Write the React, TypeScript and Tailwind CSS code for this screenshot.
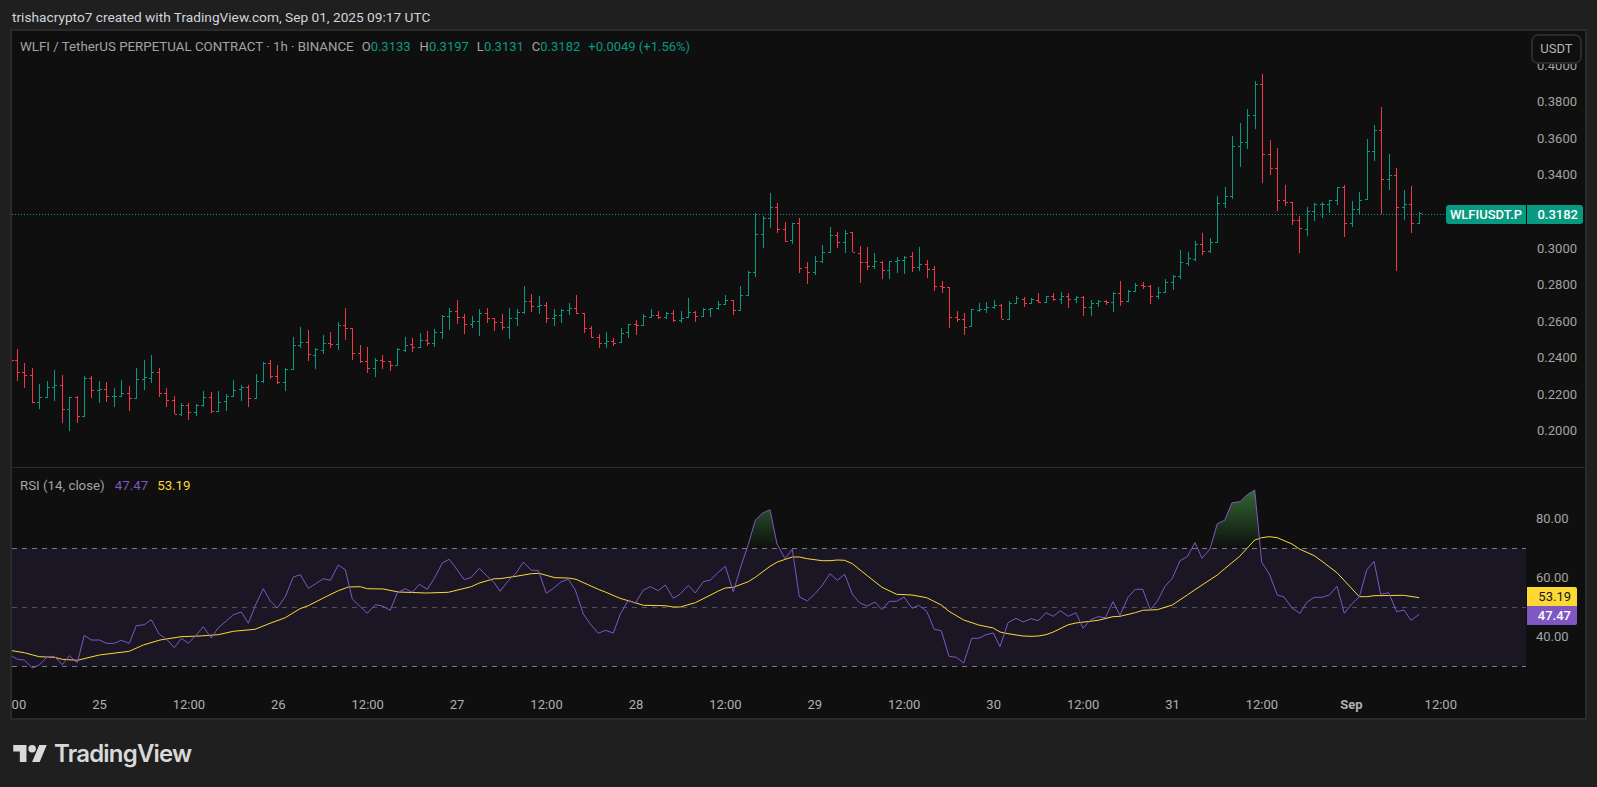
import React from "react";

type Bar = [number, number, number, number, number];

const s5: Bar[] = [
[52,237,332,271,307],[73,279,353,307,316],[97,294,398,316,398],[118,342,416,398,382],[142,333,382,382,352],[163,300,392,352,346],[187,316,458,346,418],[208,382,482,418,382],[232,378,458,382,439],[253,319,439,439,325],
[274,319,383,325,361],[298,334,398,361,358],[319,337,395,358,379],[343,355,410,379,379],[364,331,379,379,370],[388,349,422,370,385],[409,295,388,385,328],[433,271,359,328,323],[454,256,338,325,307],[478,295,382,307,370],
[499,355,410,370,391],[523,379,433,391,433],[544,400,437,433,406],[565,400,449,406,427],[589,403,437,427,406],[610,364,412,406,382],[634,367,430,382,424],[655,364,424,424,397],[679,373,422,394,379],[700,331,382,379,361],
[724,346,394,358,352],[745,345,412,352,385],[769,313,385,385,334],[790,277,338,334,280],[811,270,328,280,319],[832,286,343,319,337],[856,295,362,337,298],[880,202,298,298,226],[901,172,233,226,217],[925,181,272,217,253],
[946,235,296,256,238],[970,196,253,241,220],[991,187,233,220,223],[1015,157,239,223,166],[1036,115,211,166,175],[1057,175,269,175,250],[1081,226,280,250,274],[1102,232,310,274,295],[1126,265,320,295,271],[1147,256,296,271,274],
[1171,274,302,274,286],[1192,235,289,286,238],
];
const s6: Bar[] = [
[16,471,515,510,495],[37,474,515,493,502],[61,460,505,502,481],[82,454,497,481,490],[103,448,500,490,457],[127,406,476,457,409],[148,385,449,409,394],[172,361,431,394,412],[193,403,461,412,433],[217,408,443,433,424],
[238,388,467,424,400],[262,385,428,400,415],[283,415,452,415,427],[307,403,449,427,442],[328,385,476,442,415],[352,388,437,415,397],[373,319,401,397,364],[394,343,395,364,379],[418,349,401,379,376],[439,367,428,376,415],
[463,388,437,415,406],[484,388,428,406,391],[508,370,404,391,385],[529,346,403,385,401],[553,400,458,401,445],[574,439,473,445,472],[598,463,503,472,490],[619,457,503,490,484],[640,475,497,484,490],[664,445,487,487,460],
[685,433,473,457,433],[709,421,464,433,436],[730,403,436,436,409],[754,388,415,412,406],[775,394,418,406,412],[799,397,418,412,400],[820,391,427,400,421],[844,394,428,421,415],[865,355,412,412,397],[886,394,425,397,409],
[910,385,412,409,388],[931,385,410,388,385],[955,364,391,385,373],[976,346,373,373,361],[1000,361,404,361,391],[1021,319,391,391,346],[1045,274,346,346,277],[1066,100,290,277,163],[1090,109,203,163,115],[1111,40,145,115,82],
[1132,70,160,82,148],[1156,127,187,148,184],[1177,130,193,181,130],[1198,114,278,130,265],
];
const s7: Bar[] = [
[22,247,311,262,277],[46,229,284,277,244],[67,196,248,244,217],[91,142,217,217,166],[112,157,204,166,187],[136,151,218,187,160],[157,157,217,157,217],[181,199,308,220,247],[202,202,269,247,259],[223,220,266,259,244],
[247,244,296,247,271],[268,244,296,271,244],[292,232,278,244,241],[313,229,281,241,232],[337,217,275,229,262],[358,202,272,262,253],[382,241,293,253,268],[403,259,332,268,319],[427,304,338,319,322],[448,322,443,322,412],
[472,394,425,412,418],[493,400,464,418,442],[514,388,439,439,388],[538,370,395,391,388],[559,367,398,388,382],[583,361,388,382,376],[604,373,418,376,418],[628,364,418,418,370],[649,349,371,370,355],[673,352,380,358,370],
[694,355,373,370,358],[715,340,370,361,367],[739,349,370,367,349],[760,340,364,349,358],[784,337,371,358,349],[805,340,383,349,358],[829,349,370,358,352],[850,349,407,352,382],[874,361,407,382,370],[895,361,380,370,364],
[919,361,376,364,367],[940,337,395,367,340],[961,304,377,340,364],[985,331,367,364,334],[1006,310,337,334,316],[1030,307,326,316,319],[1051,316,371,319,349],[1075,322,356,349,337],[1096,298,337,337,307],[1120,286,331,307,289],
[1141,211,296,289,247],[1165,217,257,250,235],[1186,184,244,238,193],
];
const s8: Bar[] = [
[157,520,584,553,574],[181,535,578,575,547],[202,408,547,547,430],[226,382,443,430,409],[247,229,416,409,259],[271,190,320,259,247],[292,148,266,247,166],[316,64,206,166,73],[337,43,368,73,283],[361,241,344,283,325],
[382,265,452,325,421],[406,376,437,421,427],[427,427,494,427,481],[448,469,578,481,505],[472,442,527,508,454],[493,430,482,454,433],[517,427,473,433,433],[538,421,458,433,421],[562,382,434,421,382],[583,376,532,382,490],
[607,424,500,490,448],[628,397,463,448,421],[652,238,418,418,274],[673,196,302,274,211],[694,142,463,211,358],[718,283,389,358,346],[739,325,632,346,442],[763,391,479,442,433],[784,379,518,433,490],[808,457,490,490,460],
];

const toReal = (rows: Bar[], ox: number, oy: number) =>
  rows.map(([z, h, l, o, c]) => ({
    x: Math.floor(ox + z / 3) + 0.5,
    h: oy + h / 3,
    l: oy + l / 3,
    o: Math.floor(oy + o / 3) + 0.5,
    c: Math.floor(oy + c / 3) + 0.5,
    up: c <= o,
  }));
const bars = [
  ...toReal(s5, 0, 270),
  ...toReal(s6, 400, 180),
  ...toReal(s7, 800, 180),
  ...toReal(s8, 1150, 60),
];
const GREEN = "#089981";
const RED = "#f23645";

const pts = (arr: number[][], ox: number) =>
  arr.map(([z, v]) => [ox + z / 3, 460 + v / 3] as [number, number]);

const rsi = [
  ...pts([[36,588],[52,598],[73,600],[97,624],[118,615],[142,590],[163,589],[187,614],[208,587],[232,608],[253,526],[274,540],[298,540],[319,550],[343,550],[364,541],[388,550],[409,497],[433,494],[454,479],[478,523],[499,537],[523,563],[544,535],[565,550],[589,525],[610,500],[634,534],[655,503],[679,483],[700,464],[724,456],[745,490],[769,430],[790,386],[811,423],[832,444],[856,410],[880,351],[901,344],[925,385],[946,372],[970,356],[991,361],[1015,315],[1036,329],[1057,417],[1081,440],[1102,460],[1126,434],[1147,438],[1171,451],[1192,398],[1216,386],[1237,397],[1258,373],[1282,388],[1303,355],[1327,309],[1348,298],[1372,330],[1393,359],[1414,352],[1438,325],[1462,349],[1483,368]], 0),
  ...pts([[0,394],[25,362],[48,340],[70,306],[94,331],[115,331],[139,400],[160,385],[184,365],[205,358],[226,390],[250,462],[271,492],[295,520],[316,511],[340,519],[361,462],[385,421],[406,430],[430,390],[451,380],[475,392],[496,375],[520,415],[541,402],[565,376],[586,399],[610,365],[631,360],[655,337],[676,319],[700,395],[721,325],[745,253],[766,181],[787,160],[810,149],[831,252],[855,296],[877,268],[898,410],[922,423],[946,400],[967,376],[990,341],[1012,361],[1034,343],[1057,402],[1078,428],[1102,438],[1125,426],[1146,449],[1168,424],[1190,424],[1212,411],[1236,445],[1256,436],[1280,454],[1303,508],[1324,512],[1347,589],[1369,592],[1391,609],[1415,535],[1436,535],[1458,524],[1480,519]], 500),
  ...pts([[0,560],[24,488],[48,475],[69,486],[93,476],[115,482],[138,458],[160,469],[181,452],[205,469],[228,458],[249,505],[272,479],[294,470],[316,473],[339,425],[360,466],[384,412],[406,388],[428,388],[451,449],[472,424],[495,379],[517,355],[540,302],[562,290],[585,248],[606,295],[630,267],[652,191],[674,181],[696,128],[720,125],[742,104],[764,90],[785,307],[808,342],[832,405],[852,411],[876,444],[900,460],[920,427],[943,412],[966,412],[988,405],[1011,379],[1033,460],[1055,432],[1078,411],[1100,330],[1122,304],[1142,403],[1166,398],[1190,455],[1212,450],[1233,481],[1258,463]], 1000),
];
const ma = [
  ...pts([[36,572],[73,578],[118,590],[163,592],[187,598],[232,601],[298,585],[388,574],[430,555],[480,540],[543,530],[600,528],[655,524],[700,514],[765,508],[810,490],[856,473],[900,446],[925,437],[970,414],[1015,392],[1045,381],[1081,380],[1102,386],[1150,387],[1195,396],[1280,399],[1345,397],[1414,380],[1438,369],[1483,356]], 0),
  ...pts([[0,356],[48,349],[94,341],[117,340],[165,353],[205,354],[228,358],[295,388],[316,396],[360,415],[405,428],[430,436],[495,437],[520,441],[541,441],[586,428],[630,406],[655,393],[676,384],[700,382],[745,365],[766,352],[810,319],[832,306],[877,291],[898,291],[922,296],[967,302],[990,302],[1012,300],[1034,301],[1057,311],[1102,347],[1146,382],[1190,403],[1236,405],[1280,413],[1324,435],[1347,454],[1391,480],[1436,495],[1480,504]], 500),
  ...pts([[0,516],[24,521],[69,528],[93,529],[115,528],[138,524],[160,516],[205,494],[228,489],[294,481],[339,470],[360,469],[406,458],[428,451],[472,449],[517,435],[562,405],[585,389],[652,345],[674,326],[718,290],[742,264],[764,240],[785,233],[808,230],[832,233],[876,252],[900,268],[943,287],[966,304],[1011,338],[1078,410],[1100,410],[1122,407],[1210,406],[1258,413]], 1000),
];
const line = (p: [number, number][]) => p.map(([x, y]) => `${x.toFixed(1)},${y.toFixed(1)}`).join(" ");

const prices = ["0.4000", "0.3800", "0.3600", "0.3400", "0.3200", "0.3000", "0.2800", "0.2600", "0.2400", "0.2200", "0.2000"];
const times = ["12:00", "25", "12:00", "26", "12:00", "27", "12:00", "28", "12:00", "29", "12:00", "30", "12:00", "31", "12:00", "Sep", "12:00"];

const Ohlc = ({ k, v, gap }: { k: string; v: string; gap: string }) => (
  <span className={gap}>
    {k}
    <span className="text-[#089981]">{v}</span>
  </span>
);

export default function App() {
  return (
    <div className="w-[1597px] h-[787px] overflow-hidden bg-[#1f1f1f] flex flex-col font-['Roboto',sans-serif]">
      <div className="h-[29px] flex-none pl-[12px] flex items-center text-[13.7px] text-[#d1d4dc] pt-[5px] whitespace-nowrap">
        trishacrypto7 created with TradingView.com, Sep 01, 2025 09:17 UTC
      </div>

      <div className="ml-[10px] w-[1577px] h-[691px] flex-none border-2 border-[#2a2a2a] bg-[#0f0f0f] flex flex-col overflow-hidden">
        {/* price pane */}
        <div className="relative flex h-[436px] flex-none">
          <svg width={1515} height={436} viewBox="12 31 1515 436" className="block flex-none">
            <line x1={12} x2={1446} y1={214.5} y2={214.5} stroke={GREEN} strokeDasharray="1 2" />
            <line x1={11} x2={14} y1={360.5} y2={360.5} stroke={RED} shapeRendering="crispEdges" />
            {bars.map((b, i) => (
              <g key={i} stroke={b.up ? GREEN : RED} shapeRendering="crispEdges">
                <line x1={b.x} x2={b.x} y1={b.h} y2={b.l} />
                <line x1={b.x - 2.5} x2={b.x} y1={b.o} y2={b.o} />
                <line x1={b.x} x2={b.x + 2.5} y1={b.c} y2={b.c} />
              </g>
            ))}
          </svg>
          <div className="flex-1 flex flex-col items-end pt-[16px] pr-[8px] text-[13px] text-[#a3a3a3]">
            {prices.map((p) => (
              <div key={p} className="h-[36.6px] flex-none flex items-center">{p}</div>
            ))}
          </div>

          <div className="absolute left-[8px] top-[8px] h-[16px] flex items-center text-[13px] text-[#a3a3a3] whitespace-nowrap">
            <span className="text-[13.3px]">WLFI / TetherUS PERPETUAL CONTRACT · 1h · BINANCE</span>
            <Ohlc k="O" v="0.3133" gap="ml-[8px]" />
            <Ohlc k="H" v="0.3197" gap="ml-[9px]" />
            <Ohlc k="L" v="0.3131" gap="ml-[8px]" />
            <Ohlc k="C" v="0.3182" gap="ml-[8px]" />
            <span className="ml-[8px] text-[#089981]">+0.0049 (+1.56%)</span>
          </div>

          <div className="absolute left-[1519px] top-[3px] w-[51px] h-[30px] rounded-[7px] border-2 border-[#2a2a2a] bg-[#0f0f0f] flex items-center justify-center text-[13px] text-[#b5b5b5]">
            USDT
          </div>

          <div className="absolute left-[1434px] top-[174px] flex h-[19px] text-[13px] font-medium text-white">
            <div className="w-[80px] rounded-l-[3px] bg-[#089981] flex items-center justify-center">WLFIUSDT.P</div>
            <div className="w-[56px] ml-[1px] rounded-r-[3px] bg-[#089981] flex items-center justify-end pr-[5px]">0.3182</div>
          </div>
        </div>

        <div className="h-px flex-none bg-[#2a2a2a]" />

        {/* RSI pane */}
        <div className="relative flex h-[221px] flex-none">
          <svg width={1515} height={221} viewBox="12 468 1515 221" className="block flex-none">
            <defs>
              <linearGradient id="ob" gradientUnits="userSpaceOnUse" x1="0" x2="0" y1="459" y2="548.3">
                <stop offset="0" stopColor="#4caf50" stopOpacity={0.85} />
                <stop offset="1" stopColor="#4caf50" stopOpacity={0} />
              </linearGradient>
              <clipPath id="above">
                <rect x={12} y={468} width={1514} height={80.3} />
              </clipPath>
            </defs>
            <rect x={12} y={548.5} width={1514} height={118} fill="#1a1624" />
            <polygon
              clipPath="url(#above)"
              fill="url(#ob)"
              points={`${line(rsi)} ${rsi[rsi.length - 1][0]},548.3 ${rsi[0][0]},548.3`}
            />
            <line x1={12} x2={1526} y1={548.5} y2={548.5} stroke="#787b86" strokeDasharray="5 5" />
            <line x1={12} x2={1526} y1={607.5} y2={607.5} stroke="#787b86" strokeOpacity={0.6} strokeDasharray="5 5" />
            <line x1={12} x2={1526} y1={666.5} y2={666.5} stroke="#787b86" strokeDasharray="5 5" />
            <polyline points={line(ma)} fill="none" stroke="#fdd835" strokeWidth={1} />
            <polyline points={line(rsi)} fill="none" stroke="#7e57c2" strokeWidth={1} />
          </svg>
          <div className="flex-1 flex flex-col pt-[21px] pl-[9px] text-[13px] text-[#a3a3a3]">
            {["80.00", "60.00", "40.00"].map((p) => (
              <div key={p} className="h-[59px] flex-none flex items-center">{p}</div>
            ))}
          </div>

          <div className="absolute left-[8px] top-[10px] h-[16px] flex items-center text-[13.3px] text-[#a3a3a3] whitespace-nowrap">
            <span>RSI (14, close)</span>
            <span className="ml-[10px] text-[#7e57c2]">47.47</span>
            <span className="ml-[9px] text-[#fdd835]">53.19</span>
          </div>

          <div className="absolute left-[1515px] top-[119px] w-[50px] text-[13px]">
            <div className="h-[19px] bg-[#fdd835] text-[#131722] rounded-tr-[2px] flex items-center justify-end pr-[6px]">53.19</div>
            <div className="h-[19px] bg-[#7e57c2] text-white font-medium rounded-br-[2px] flex items-center justify-end pr-[6px]">47.47</div>
          </div>
        </div>

        {/* time axis */}
        <div className="flex-1 flex overflow-hidden pt-[6px] text-[13px] text-[#b0b0b0]">
          <div className="flex ml-[-46.7px]">
            {times.map((t, i) => (
              <div key={i} className={`w-[89.43px] flex-none text-center ${t === "Sep" ? "font-bold" : ""}`}>{t}</div>
            ))}
          </div>
        </div>
      </div>

      <div className="flex-1 flex items-center pl-[13px] gap-[7px] text-[#d9d9d9]">
        <svg width={34} height={17} viewBox="0 4 35.5 18" fill="currentColor" className="block flex-none">
          <path d="M14 22H7V11H0V4h14v18zM28 22h-8l7.5-18h8L28 22z" />
          <circle cx={20} cy={8} r={4} />
        </svg>
        <span className="text-[24px] font-semibold font-['Inter',sans-serif] tracking-[-0.8px]">TradingView</span>
      </div>
    </div>
  );
}
